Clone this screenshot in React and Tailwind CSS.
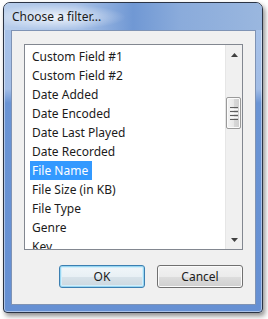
import React from "react";

const items = [
  "Custom Field #1",
  "Custom Field #2",
  "Date Added",
  "Date Encoded",
  "Date Last Played",
  "Date Recorded",
  "File Name",
  "File Size (in KB)",
  "File Type",
  "Genre",
  "Key",
];

function ArrowUp() {
  return (
    <svg width="7" height="4" viewBox="0 0 7 4">
      <path d="M0 4 L3.5 0 L7 4 Z" fill="#404040" />
    </svg>
  );
}

function ArrowDown() {
  return (
    <svg width="7" height="4" viewBox="0 0 7 4">
      <path d="M0 0 L3.5 4 L7 0 Z" fill="#404040" />
    </svg>
  );
}

export default function App() {
  const selected = "File Name";

  return (
    <div className="w-[268px] h-[319px] overflow-hidden bg-white font-['Noto_Sans',sans-serif] text-[12px] text-[#1b1b1b]">
      {/* fenêtre */}
      <div className="ml-[3px] mt-[2px] w-[260px] h-[311px] flex flex-col rounded-t-[7px] rounded-b-[4px] border border-[#2b3445] bg-[linear-gradient(180deg,#aac4e9_0px,#a2bde6_86px,#6a94d4_100px,#6690d3_100%)] shadow-[2px_3px_5px_rgba(0,0,0,0.45),inset_0_0_0_1px_rgba(255,255,255,0.45)]">
        <div className="h-[27px] flex items-center pl-[8px] rounded-t-[6px] bg-[radial-gradient(ellipse_70px_13px_at_52px_14px,rgba(255,255,255,0.8),rgba(255,255,255,0)),linear-gradient(90deg,#b7cdeb_0%,#a9c2e7_28%,#7098d4_50%,#8aabdb_68%,#9ab7df_100%)]">
          <span className="leading-none">Choose a filter...</span>
        </div>

        <div className="ml-[7px] mr-[6px] mb-[7px] h-[275px] border border-[#7f93b4] bg-[#f0f0f0] flex flex-col pt-[13px] px-[12px]">
          {/* liste */}
          <div className="h-[206px] border border-[#828790] bg-white flex overflow-hidden">
            <div className="flex-1 pt-[2px] overflow-hidden">
              {items.map((it) => (
                <div key={it} className="h-[19px] pl-[5px] flex">
                  <span
                    className={`h-[19px] pl-[2px] pr-[4px] flex items-center whitespace-nowrap ${
                      it === selected ? "bg-[#3399ff] text-white" : ""
                    }`}
                  >
                    {it}
                  </span>
                </div>
              ))}
            </div>

            {/* barre de défilement */}
            <div className="w-[17px] flex flex-col bg-[#f0f0f0] border-l border-[#e6e6e6]">
              <div className="h-[17px] flex items-center justify-center pt-[2px]">
                <ArrowUp />
              </div>
              <div className="h-[35px]" />
              <div className="h-[32px] w-[15px] rounded-[2px] border border-[#9a9a9a] bg-[linear-gradient(90deg,#f4f4f4_0%,#e8e8e8_50%,#d8d8d8_51%,#cfcfcf_100%)] shadow-[inset_0_0_0_1px_#fbfbfb] flex flex-col items-center justify-center gap-[1px]">
                <div className="w-[8px] h-[1px] bg-[#5e5e5e]" />
                <div className="w-[8px] h-[1px] bg-[#f8f8f8]" />
                <div className="w-[8px] h-[1px] bg-[#5e5e5e]" />
                <div className="w-[8px] h-[1px] bg-[#f8f8f8]" />
                <div className="w-[8px] h-[1px] bg-[#5e5e5e]" />
                <div className="w-[8px] h-[1px] bg-[#f8f8f8]" />
                <div className="w-[8px] h-[1px] bg-[#5e5e5e]" />
              </div>
              <div className="flex-1" />
              <div className="h-[17px] flex items-center justify-center pb-[1px]">
                <ArrowDown />
              </div>
            </div>
          </div>

          {/* boutons */}
          <div className="mt-[15px] flex justify-end gap-[12px]">
            <button className="w-[86px] h-[23px] rounded-[3px] border border-[#3c7fb1] bg-[linear-gradient(180deg,#f1f6f9_0%,#e8f0f5_50%,#d8e3ea_51%,#cbd7df_100%)] shadow-[inset_0_0_0_1px_#98d6f2,inset_0_0_0_2px_#d3eefa] flex items-center justify-center leading-none">
              OK
            </button>
            <button className="w-[86px] h-[23px] rounded-[3px] border border-[#707070] bg-[linear-gradient(180deg,#f2f2f2_0%,#ebebeb_50%,#dddddd_51%,#cfcfcf_100%)] shadow-[inset_0_0_0_1px_#fbfbfb] flex items-center justify-center leading-none">
              Cancel
            </button>
          </div>
        </div>
      </div>
    </div>
  );
}
